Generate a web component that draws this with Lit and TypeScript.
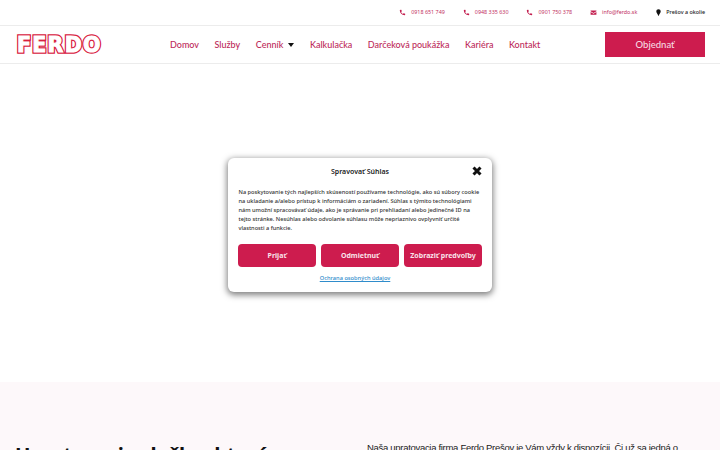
import { LitElement, html, css } from "lit";
import { customElement } from "lit/decorators.js";

const phone = html`<svg class="ico" viewBox="0 0 24 24"><path d="M6.600 2.500 3.400 3.300C2.900 3.500 2.600 3.900 2.600 4.400 3 14 10 21 19.600 21.400c.5 0 .9-.3 1.100-.8l.8-3.200c.1-.5-.1-1-.6-1.200l-4.200-1.800c-.4-.2-.9-.1-1.200.3l-1.900 2.200c-2.900-1.400-5.200-3.700-6.600-6.600l2.200-1.900c.4-.3.5-.8.3-1.200L8.200 3.100c-.3-.5-1-.8-1.600-.6z"/></svg>`;
const mail = html`<svg class="ico" viewBox="0 0 24 24"><path d="M2 5h20v3l-10 6L2 8zM2 10.500l10 6 10-6V20H2z"/></svg>`;
const pin = html`<svg class="ico dark" viewBox="0 0 24 24"><path d="M12 1C7.600 1 4.500 4.200 4.500 8.500c0 5 5 8 6.500 14.500h2c1.500-6.500 6.500-9.500 6.500-14.500C19.500 4.200 16.400 1 12 1z"/></svg>`;

@customElement("app-root")
export class AppRoot extends LitElement {
  static styles = css`
    :host { display: block; height: 450px; overflow: hidden; position: relative; background: #fff; font-family: "Noto Sans", sans-serif; }
    .top { height: 26px; box-sizing: border-box; border-bottom: 1px solid #ececec; display: flex; justify-content: flex-end; align-items: center; gap: 18px; padding: 0 15px 1px 0; font-size: 5.400px; color: #c2315f; }
    .top span { display: flex; align-items: center; gap: 5px; white-space: nowrap; }
    .top .loc { color: #222; font-weight: 500; gap: 4px; }
    .ico { width: 7px; height: 7px; fill: #c21d4e; flex: none; }
    .ico.dark { fill: #111; }
    .head { height: 38px; box-sizing: border-box; border-bottom: 1px solid #ececec; display: flex; align-items: center; padding: 0 15px 0 17px; }
    .brand { width: 153px; flex: none; padding-top: 2px; }
    .logo { position: relative; display: inline-block; font-family: "DejaVu Sans", sans-serif; font-weight: 700; font-size: 20.500px; letter-spacing: 1.300px; line-height: 1; color: #d8213f; -webkit-text-stroke: 3.500px #d8213f; text-shadow: 0 1px 0 #d8213f; }
    .logo::after { content: "FERDO"; position: absolute; left: 0; top: 0; color: #fff; -webkit-text-stroke: 1px #fff; text-shadow: none; }
    nav { display: flex; align-items: center; gap: 15.500px; font-family: Lato, sans-serif; font-size: 9px; font-weight: 500; color: #bd2a5a; white-space: nowrap; }
    nav .m { display: flex; align-items: center; gap: 5px; }
    .caret { width: 0; height: 0; border-style: solid; border-color: #111 transparent transparent; border-width: 4px 3px 0; }
    .cta { margin-left: auto; width: 100px; height: 25px; background: #cd1c4e; color: #f6dbe3; font-family: Lato, sans-serif; font-size: 9.500px; font-weight: 500; display: flex; align-items: center; justify-content: center; }
    .blank { height: 318px; }
    .band { height: 68px; background: #fdf8fa; box-sizing: border-box; display: grid; grid-template-columns: 352px 1fr; padding: 58px 0 0 15px; overflow: hidden; }
    h2 { margin: 0; font-size: 20.500px; letter-spacing: -0.3px; line-height: 30px; font-weight: 700; color: #111; white-space: nowrap; }
    .band p { margin: 0; font-family: "Liberation Sans", sans-serif; font-size: 9.500px; letter-spacing: -0.3px; line-height: 16px; color: #222; white-space: nowrap; }
    .modal { position: absolute; left: 228px; top: 158px; width: 264px; height: 134px; box-sizing: border-box; background: #fff; border-radius: 6px; box-shadow: 0 2px 6px 1px rgba(0,0,0,.5); padding: 7px 10px 0; display: flex; flex-direction: column; color: #222; }
    .mh { height: 12px; display: flex; align-items: center; justify-content: center; position: relative; font-size: 7px; font-weight: 600; }
    .x { position: absolute; right: 0; top: 1px; width: 10px; height: 10px; stroke: #111; stroke-width: 3; }
    .mb { margin: 10.500px 0 0 0.500px; font-size: 5.650px; line-height: 9px; font-weight: 500; color: #333; white-space: nowrap; }
    .btns { display: grid; grid-template-columns: repeat(3, 1fr); gap: 5px; margin-top: 11.500px; }
    .btn { height: 23px; background: #cd1c4e; border-radius: 4px; color: #f9e3ea; font-size: 7px; font-weight: 700; display: flex; align-items: center; justify-content: center; white-space: nowrap; }
    .link { margin: 7px 10px 0 0; text-align: center; font-size: 5.700px; font-weight: 500; color: #2f8ccb; text-decoration: underline; }
  `;

  render() {
    return html`
      <div class="top">
        <span>${phone}0918 651 749</span>
        <span>${phone}0948 335 630</span>
        <span>${phone}0901 750 378</span>
        <span>${mail}info@ferdo.sk</span>
        <span class="loc">${pin}Prešov a okolie</span>
      </div>
      <header class="head">
        <div class="brand"><div class="logo">FERDO</div></div>
        <nav>
          <span>Domov</span><span>Služby</span>
          <span class="m">Cenník <i class="caret"></i></span>
          <span>Kalkulačka</span><span>Darčeková poukážka</span><span>Kariéra</span><span>Kontakt</span>
        </nav>
        <div class="cta">Objednať</div>
      </header>
      <div class="blank"></div>
      <section class="band">
        <h2>Upratovacia služba, ktorá</h2>
        <p>Naša upratovacia firma Ferdo Prešov je Vám vždy k dispozícii. Či už sa jedná o</p>
      </section>
      <div class="modal">
        <div class="mh">Spravovať Súhlas
          <svg class="x" viewBox="0 0 10 10"><path d="M1.500 1.500l7 7M8.500 1.500l-7 7"/></svg>
        </div>
        <p class="mb">Na poskytovanie tých najlepších skúseností používame technológie, ako sú súbory cookie<br>na ukladanie a/alebo prístup k informáciám o zariadení. Súhlas s týmito technológiami<br>nám umožní spracovávať údaje, ako je správanie pri prehliadaní alebo jedinečné ID na<br>tejto stránke. Nesúhlas alebo odvolanie súhlasu môže nepriaznivo ovplyvniť určité<br>vlastnosti a funkcie.</p>
        <div class="btns">
          <div class="btn">Prijať</div><div class="btn">Odmietnuť</div><div class="btn">Zobraziť predvoľby</div>
        </div>
        <div class="link">Ochrana osobných údajov</div>
      </div>
    `;
  }
}
